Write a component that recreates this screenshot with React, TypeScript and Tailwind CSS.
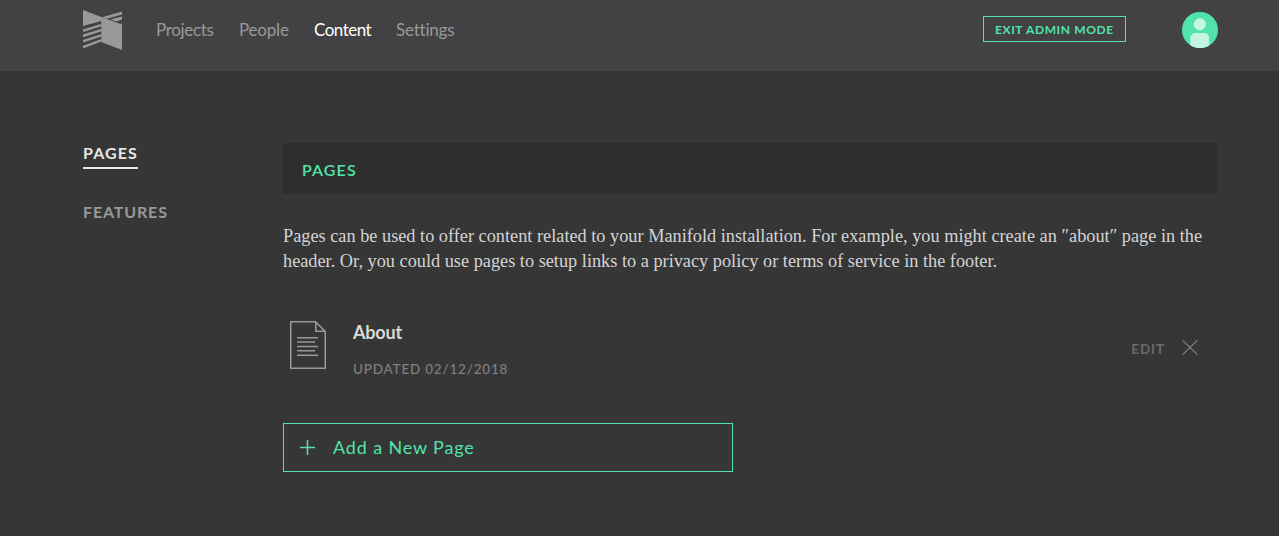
import React from "react";

const navItems = [
  { label: "Projects", cls: "w-[58px] mr-[25px] text-[#999] tracking-[-0.32px]" },
  { label: "People", cls: "w-[50px] mr-[25px] text-[#999] tracking-[-0.2px]" },
  { label: "Content", cls: "w-[57px] mr-[25px] text-white tracking-[-0.5px]" },
  { label: "Settings", cls: "w-[58px] text-[#999] tracking-[-0.22px]" },
];

function Logo() {
  return (
    <svg className="h-10 w-[39px] shrink-0" viewBox="0 0 39 40" fill="#999">
      <path d="M0 0 19 7.2 37.5 14 39 13V40L18.3 32V11L0 16Z" />
      <path d="M19 7.2 39 1.5V4.4L23.5 8.8ZM27.5 9.6 39 6.4V9.6L33.5 11.4Z" />
      <path d="M0 19.4 18.5 13.8V16.2L0 22ZM0 24.6 18.5 18.8V21.2L0 27.2ZM0 30 18.5 24V26.4L0 32.6ZM0 35.8 18.5 29V31.4L0 38.6Z" />
    </svg>
  );
}

function Avatar() {
  return (
    <svg className="h-9 w-9" viewBox="0 0 36 36">
      <defs>
        <clipPath id="avatar"><circle cx="18" cy="18" r="18" /></clipPath>
      </defs>
      <g clipPath="url(#avatar)">
        <rect width="36" height="36" fill="#52e3ac" />
        <circle cx="17.8" cy="12.2" r="6" fill="#c4f6e3" />
        <rect x="8.3" y="21" width="18.8" height="20" rx="5" fill="#c4f6e3" />
      </g>
    </svg>
  );
}

export default function App() {
  return (
    <div className="flex h-[536px] w-[1279px] flex-col overflow-hidden border-b-2 border-[#373235] bg-[#363636] font-['Lato',sans-serif]">
      <header className="flex h-[71px] shrink-0 items-start bg-[#424244] pl-[83px] pr-[61px] pt-[10px]">
        <Logo />
        <nav className="ml-[34px] mt-[8px] flex text-[17px] leading-6">
          {navItems.map((n) => (
            <a key={n.label} className={`whitespace-nowrap ${n.cls}`}>{n.label}</a>
          ))}
        </nav>
        <button className="ml-auto mt-[6px] h-[26px] w-[143px] whitespace-nowrap border border-[#52e3ac] pl-[11px] text-left text-[12px] font-bold leading-[25px] tracking-[0.62px] text-[#52e3ac]">
          EXIT ADMIN MODE
        </button>
        <div className="ml-14 mt-[2px]"><Avatar /></div>
      </header>

      <div className="flex pl-[83px] pr-[61px] pt-[72px]">
        <aside className="flex w-[200px] shrink-0 flex-col items-start text-[16px] font-bold leading-5">
          <a className="h-[26px] w-[55px] whitespace-nowrap border-b-2 border-[#e8e8e8] tracking-[1.1px] text-[#e8e8e8]">PAGES</a>
          <a className="mt-[33px] whitespace-nowrap tracking-[0.85px] text-[#999]">FEATURES</a>
        </aside>
        <main className="w-[935px]">
          <h2 className="h-[51px] bg-[#2e2e2e] pl-[19px] pt-[3px] text-[16px] font-semibold leading-[48px] tracking-[1.1px] text-[#52e3ac]">PAGES</h2>
          <p className="mt-[30px] whitespace-nowrap font-['Liberation_Serif',serif] text-[18.3px] leading-[25px] text-[#d4d4d4]">
            <span className="block">Pages can be used to offer content related to your Manifold installation. For example, you might create an ″about″ page in the</span>
            <span className="block">header. Or, you could use pages to setup links to a privacy policy or terms of service in the footer.</span>
          </p>
          <div className="mt-[46px] flex h-[62px] items-start">
            <svg className="ml-[7px] mt-[1px] h-12 w-9" viewBox="0 0 36 48" fill="none" stroke="#999" strokeWidth="1.5">
              <path d="M.75.75H25.5L35.25 10.5V47.25H.75ZM25.75.75V10.25H35.25" />
              <path d="M7 16.7H28M7 21H25M7 25.5H28M7 29.8H25M7 34.3H28" />
            </svg>
            <div className="ml-[27px] whitespace-nowrap">
              <h3 className="text-[18px] font-bold leading-6 tracking-[-0.2px] text-[#d9d9d9]">About</h3>
              <p className="mt-[15px] text-[13.5px] font-medium leading-5 tracking-[0.8px] text-[#808080]">UPDATED 02/12/2018</p>
            </div>
            <div className="ml-auto mr-5 mt-[19px] flex">
              <span className="mr-[17px] text-[13.5px] font-bold leading-5 tracking-[0.9px] text-[#696969]">EDIT</span>
              <svg className="mt-px h-[15px] w-4" viewBox="0 0 16 15" stroke="#808080" strokeWidth="1.1"><path d="M.5.3 15.5 14.7M15.5.3.5 14.7" /></svg>
            </div>
          </div>
          <button className="mt-[41px] flex h-[49px] w-[450px] items-center border border-[#52e3ac] pl-4 text-[18px] leading-6 tracking-[0.85px] text-[#52e3ac]">
            <svg className="mr-[18px] h-[15px] w-[15px]" viewBox="0 0 15 15" stroke="#52e3ac" strokeWidth="1.5"><path d="M0 7.5H15M7.5 0V15" /></svg>
            <span className="-mt-px">Add a New Page</span>
          </button>
        </main>
      </div>
    </div>
  );
}
